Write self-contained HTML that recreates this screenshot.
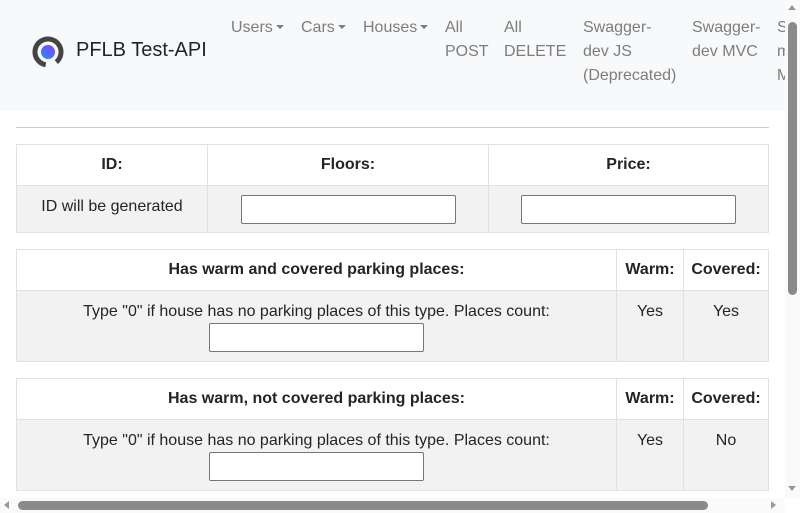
<!DOCTYPE html>
<html><head><meta charset="utf-8"><style>
*{box-sizing:border-box;margin:0;padding:0}
html,body{width:800px;height:513px;overflow:hidden;background:#fff;font-family:"Liberation Sans",sans-serif;color:#212529}
.nav{position:absolute;left:0;top:0;width:785px;height:111px;background:#f8f9fa}
.brand{position:absolute;left:76px;top:39px;font-size:20px;color:#212529}
.logo{position:absolute;left:32px;top:36px}
.nl{position:absolute;top:16px;font-size:16px;line-height:24px;color:#7d7d7d}
.car::after{content:"";display:inline-block;margin-left:3px;vertical-align:3px;border-top:4px solid #7d7d7d;border-left:4px solid transparent;border-right:4px solid transparent}
.hr{position:absolute;left:16px;top:127px;width:753px;border-top:1px solid #ccc}
table{position:absolute;left:16px;width:753px;border-collapse:collapse;font-size:16px}
td,th{border:1px solid #dee2e6;text-align:center;vertical-align:top}
th{height:41px;vertical-align:middle;font-weight:bold;background:#fff}
tr.r td{background:#f2f2f2;padding-top:12px}
input{width:215px;height:29px;border:1px solid #767676;border-radius:2px;background:#fff}
.vs{position:absolute;left:785px;top:0;width:15px;height:498px;background:#fafafa}
.hs{position:absolute;left:0;top:498px;width:785px;height:15px;background:#fafafa}
</style></head><body>
<div class="nav">
<svg class="logo" width="32" height="32" viewBox="0 0 32 32"><defs><linearGradient id="g" x1="0" y1="1" x2="1" y2="0"><stop offset="0" stop-color="#1e90ff"/><stop offset="1" stop-color="#8a3cff"/></linearGradient></defs><circle cx="16" cy="16" r="13" fill="none" stroke="#444" stroke-width="5" stroke-dasharray="70 12" transform="rotate(100 16 16)"/><circle cx="16" cy="16" r="7" fill="url(#g)"/></svg>
<div class="brand">PFLB Test-API</div>
<div class="nl car" style="left:231px">Users</div>
<div class="nl car" style="left:301px">Cars</div>
<div class="nl car" style="left:363px">Houses</div>
<div class="nl" style="left:445px">All<br>POST</div>
<div class="nl" style="left:504px">All<br>DELETE</div>
<div class="nl" style="left:583px">Swagger-<br>dev JS<br>(Deprecated)</div>
<div class="nl" style="left:692px">Swagger-<br>dev MVC</div>
<div class="nl" style="left:777px">S<br>m<br>M</div>
</div>
<div class="hr"></div>
<table style="top:144px"><tr><th style="width:191px">ID:</th><th style="width:281px">Floors:</th><th>Price:</th></tr>
<tr class="r" style="height:47px"><td>ID will be generated</td><td style="padding-top:9px"><input></td><td style="padding-top:9px"><input></td></tr></table>
<table style="top:249px"><tr><th style="width:600px">Has warm and covered parking places:</th><th style="width:67px">Warm:</th><th>Covered:</th></tr>
<tr class="r" style="height:71px"><td>Type "0" if house has no parking places of this type. Places count:<br><input style="margin-top:2px"></td><td>Yes</td><td>Yes</td></tr></table>
<table style="top:378px"><tr><th style="width:600px">Has warm, not covered parking places:</th><th style="width:67px">Warm:</th><th>Covered:</th></tr>
<tr class="r" style="height:71px"><td>Type "0" if house has no parking places of this type. Places count:<br><input style="margin-top:2px"></td><td>Yes</td><td>No</td></tr></table>
<div class="vs"><div style="position:absolute;left:3px;top:22px;width:9px;height:273px;background:#8a8a8a;border-radius:5px"></div>
<div style="position:absolute;left:3px;top:5px;border-bottom:5px solid #999;border-left:4px solid transparent;border-right:4px solid transparent"></div>
<div style="position:absolute;left:3px;top:486px;border-top:5px solid #999;border-left:4px solid transparent;border-right:4px solid transparent"></div></div>
<div class="hs">
<div style="position:absolute;left:18px;top:3px;width:690px;height:9px;background:#8a8a8a;border-radius:5px"></div>
<div style="position:absolute;left:4px;top:3px;border-right:5px solid #999;border-top:4px solid transparent;border-bottom:4px solid transparent"></div>
<div style="position:absolute;left:771px;top:3px;border-left:5px solid #999;border-top:4px solid transparent;border-bottom:4px solid transparent"></div></div>
</body></html>
